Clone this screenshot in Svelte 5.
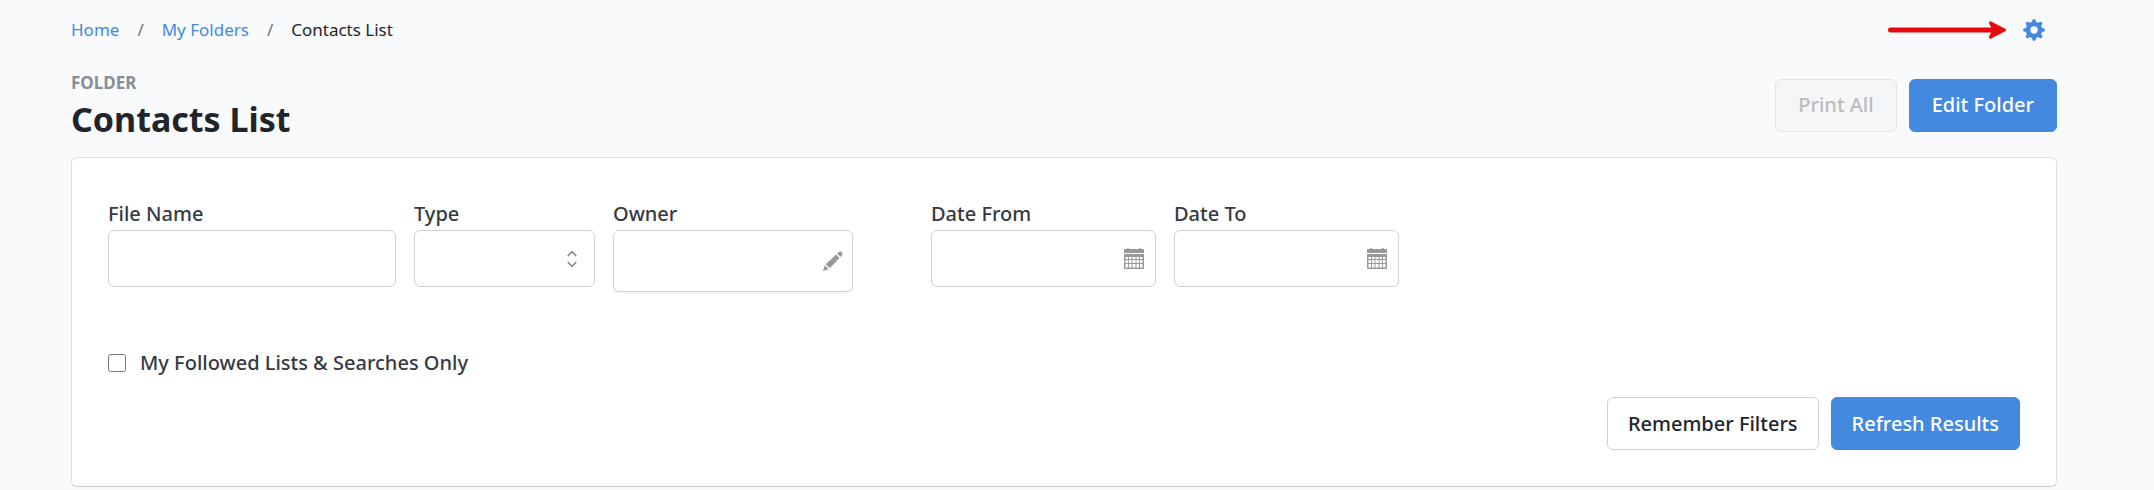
<script>
  let fileName = $state('');
  let type = $state('');
  let owner = $state('');
  let dateFrom = $state('');
  let dateTo = $state('');
  let followedOnly = $state(false);

  const teeth = [0, 45, 90, 135, 180, 225, 270, 315];
</script>

{#snippet calendar()}
  <svg class="field-icon" width="20" height="21" viewBox="0 0 20 21" aria-hidden="true">
    <path fill="#999" d="M3 1a1 1 0 0 1 2 0h10a1 1 0 0 1 2 0h2a1 1 0 0 1 1 1v3H0V2a1 1 0 0 1 1-1z" />
    <path
      fill="#999"
      fill-rule="evenodd"
      d="M0 6h20v14a1 1 0 0 1-1 1H1a1 1 0 0 1-1-1zM1.500 9v2h2.500V9zM5 9v2h2.500V9zM8.500 9v2h3V9zM12.500 9v2H15V9zM16 9v2h2.500V9zM1.500 12v3h2.500v-3zM5 12v3h2.500v-3zM8.500 12v3h3v-3zM12.500 12v3H15v-3zM16 12v3h2.500v-3zM1.500 16v3.500h2.500V16zM5 16v3.500h2.500V16zM8.500 16v3.500h3V16zM12.500 16v3.500H15V16zM16 16v3.500h2.500V16z"
    />
  </svg>
{/snippet}

<div class="page">
  <header class="topbar">
    <nav aria-label="Breadcrumb">
      <ol class="crumbs">
        <li><a href="#home">Home</a></li>
        <li><a href="#folders">My Folders</a></li>
        <li aria-current="page">Contacts List</li>
      </ol>
    </nav>
    <div class="tools">
      <svg width="120" height="20" viewBox="0 0 120 20" aria-hidden="true">
        <path d="M3.500 10H108" stroke="#e60a0a" stroke-width="5" stroke-linecap="round" />
        <path d="M103.500 2.800 117.500 10 103.500 17.200 107 10z" fill="#e60a0a" stroke="#e60a0a" stroke-width="3" stroke-linejoin="round" />
      </svg>
      <button class="gear" aria-label="Settings">
        <svg width="22" height="22" viewBox="0 0 22 22" aria-hidden="true">
          <circle cx="11" cy="11" r="6" fill="none" stroke="#4489e0" stroke-width="4.600" />
          {#each teeth as angle}
            <path d="M8.600 4 9.400 1.200Q9.600.2 10.300.2H11.700Q12.400.2 12.600 1.200L13.400 4z" fill="#4489e0" transform="rotate({angle} 11 11)" />
          {/each}
        </svg>
      </button>
    </div>
  </header>

  <div class="heading">
    <div>
      <div class="kind">FOLDER</div>
      <h1>Contacts List</h1>
    </div>
    <div class="actions">
      <button class="btn" disabled>Print All</button>
      <button class="btn primary">Edit Folder</button>
    </div>
  </div>

  <form class="card" onsubmit={(e) => e.preventDefault()}>
    <div class="fields">
      <div class="field file">
        <label for="file-name">File Name</label>
        <input id="file-name" type="text" bind:value={fileName} />
      </div>
      <div class="field type">
        <label for="type">Type</label>
        <div class="control">
          <select id="type" bind:value={type}>
            <option value=""></option>
            <option value="list">List</option>
            <option value="search">Search</option>
          </select>
          <svg class="field-icon" width="10" height="18" viewBox="0 0 10 18" fill="none" stroke="#868b90" stroke-width="1.600" aria-hidden="true">
            <path d="M.7 6 5 1.700 9.300 6M.7 12 5 16.300 9.300 12" />
          </svg>
        </div>
      </div>
      <div class="field owner">
        <label for="owner">Owner</label>
        <div class="control">
          <input id="owner" type="text" bind:value={owner} />
          <svg class="field-icon" width="20" height="20" viewBox="0 0 20 20" fill="#999" aria-hidden="true">
            <path d="M0 20 1.700 14.300 5.700 18.300zM2.700 13.200 13.200 3.600 16.600 7 6.800 17.200zM14.300 2.600 16.300.7Q17.200-.1 18.200.8L19.300 1.900Q20.200 2.900 19.300 3.900L17.500 6z" />
          </svg>
        </div>
      </div>
      <div class="field date first-date">
        <label for="date-from">Date From</label>
        <div class="control">
          <input id="date-from" type="text" bind:value={dateFrom} />
          {@render calendar()}
        </div>
      </div>
      <div class="field date">
        <label for="date-to">Date To</label>
        <div class="control">
          <input id="date-to" type="text" bind:value={dateTo} />
          {@render calendar()}
        </div>
      </div>
    </div>

    <label class="check">
      <input type="checkbox" bind:checked={followedOnly} />
      <span>My Followed Lists &amp; Searches Only</span>
    </label>

    <div class="actions">
      <button class="btn" type="button">Remember Filters</button>
      <button class="btn primary" type="submit">Refresh Results</button>
    </div>
  </form>
</div>

<style>
  :global(body) {
    background: #f9fafc;
  }

  .page {
    box-sizing: border-box;
    padding: 16px 97px 4px 71px;
    color: #212529;
    font-family: 'Segoe UI', 'Noto Sans', sans-serif;
    font-size: 20px;
    line-height: 28px;
  }

  .page * {
    box-sizing: border-box;
  }

  .topbar,
  .heading {
    display: flex;
    justify-content: space-between;
    align-items: center;
  }

  .crumbs {
    display: flex;
    margin: 0;
    padding: 0;
    list-style: none;
    font-size: 17px;
    font-weight: 400;
  }

  .crumbs li + li::before {
    content: '/';
    margin: 0 18px;
    color: #6c757d;
  }

  .crumbs a {
    color: #4489e0;
    text-decoration: none;
  }

  .tools {
    display: flex;
    align-items: center;
    gap: 16px;
    padding-right: 12px;
  }

  .gear {
    display: flex;
    padding: 0;
    border: 0;
    background: none;
    cursor: pointer;
  }

  .heading {
    padding: 25px 0 16px;
  }

  .kind {
    color: #868e96;
    font-size: 17px;
    font-weight: 700;
  }

  h1 {
    margin: 0;
    font-size: 34px;
    font-weight: 700;
    line-height: 44px;
  }

  .actions {
    display: flex;
    justify-content: flex-end;
    gap: 12px;
  }

  .btn {
    height: 53px;
    padding: 0 20px;
    border: 1px solid #ced2d6;
    border-radius: 6px;
    background: #fff;
    color: #212529;
    font: inherit;
    font-weight: 500;
    cursor: pointer;
  }

  .heading .btn {
    padding: 0 22px;
  }

  .btn.primary {
    border-color: #4489e0;
    background: #4489e0;
    color: #fff;
  }

  .btn:disabled {
    border-color: #e2e4e7;
    background: #f5f6f8;
    color: #babcbe;
    cursor: default;
  }

  .card {
    padding: 42px 36px 36px;
    border: 1px solid #dcdfe3;
    border-bottom-color: #c9ccd2;
    border-radius: 6px;
    background: #fff;
  }

  .fields {
    display: flex;
    flex-wrap: wrap;
    align-items: flex-start;
    gap: 18px;
    margin-bottom: 57px;
  }

  .field label {
    display: block;
    margin-bottom: 2px;
    color: #343a40;
    font-weight: 500;
  }

  .field input,
  .field select {
    display: block;
    width: 100%;
    height: 57px;
    padding: 0 48px 0 16px;
    border: 1px solid #ced0d6;
    border-radius: 6px;
    background: #fff;
    color: inherit;
    font: inherit;
    appearance: none;
  }

  .field.file {
    width: 288px;
  }

  .field.type {
    width: 181px;
  }

  .field.owner {
    width: 240px;
  }

  .field.owner input {
    height: 62px;
    box-shadow: 0 1px 2px #0000000f;
  }

  .field.date {
    width: 225px;
  }

  .first-date {
    margin-left: 60px;
  }

  .control {
    display: grid;
    align-items: center;
  }

  .control > :global(*) {
    grid-area: 1 / 1;
  }

  .field-icon {
    justify-self: end;
    margin-right: 12px;
    pointer-events: none;
  }

  .type .field-icon {
    margin-right: 18px;
  }

  .owner .field-icon {
    margin-right: 10px;
  }

  .check {
    display: flex;
    align-items: center;
    gap: 14px;
    width: max-content;
    margin-bottom: 20px;
    color: #343a40;
    font-weight: 500;
  }

  .check input {
    width: 18px;
    height: 18px;
    margin: 0;
  }
</style>
